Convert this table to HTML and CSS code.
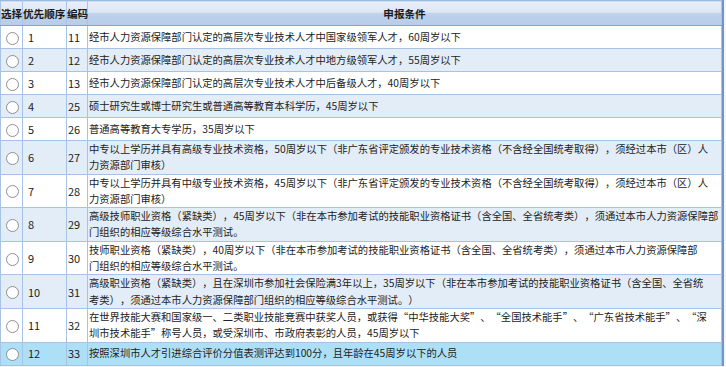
FILE: index.html
```html
<!DOCTYPE html>
<html lang="zh-CN">
<head>
<meta charset="utf-8">
<title>申报条件</title>
<link rel="stylesheet" href="styles.css">
</head>
<body>
<div class="grid-wrap">
<table class="grid">
  <colgroup>
    <col class="c-sel"><col class="c-ord"><col class="c-code"><col class="c-cond">
  </colgroup>
  <thead>
    <tr>
      <th class="h-sel">选择</th>
      <th class="h-ord">优先顺序</th>
      <th class="h-code">编码</th>
      <th class="h-cond">申报条件</th>
    </tr>
  </thead>
  <tbody>
    <tr class="one">
      <td class="sel"><span class="radio"></span></td><td class="ord">1</td><td class="code">11</td>
      <td class="cond">经市人力资源保障部门认定的高层次专业技术人才中国家级领军人才，60周岁以下</td>
    </tr>
    <tr class="one alt">
      <td class="sel"><span class="radio"></span></td><td class="ord">2</td><td class="code">12</td>
      <td class="cond">经市人力资源保障部门认定的高层次专业技术人才中地方级领军人才，55周岁以下</td>
    </tr>
    <tr class="one">
      <td class="sel"><span class="radio"></span></td><td class="ord">3</td><td class="code">13</td>
      <td class="cond">经市人力资源保障部门认定的高层次专业技术人才中后备级人才，40周岁以下</td>
    </tr>
    <tr class="one alt">
      <td class="sel"><span class="radio"></span></td><td class="ord">4</td><td class="code">25</td>
      <td class="cond">硕士研究生或博士研究生或普通高等教育本科学历，45周岁以下</td>
    </tr>
    <tr class="one">
      <td class="sel"><span class="radio"></span></td><td class="ord">5</td><td class="code">26</td>
      <td class="cond">普通高等教育大专学历，35周岁以下</td>
    </tr>
    <tr class="two alt">
      <td class="sel"><span class="radio"></span></td><td class="ord">6</td><td class="code">27</td>
      <td class="cond">中专以上学历并具有高级专业技术资格，50周岁以下（非广东省评定颁发的专业技术资格（不含经全国统考取得），须经过本市（区）人<br>力资源部门审核）</td>
    </tr>
    <tr class="two">
      <td class="sel"><span class="radio"></span></td><td class="ord">7</td><td class="code">28</td>
      <td class="cond">中专以上学历并具有中级专业技术资格，45周岁以下（非广东省评定颁发的专业技术资格（不含经全国统考取得），须经过本市（区）人<br>力资源部门审核）</td>
    </tr>
    <tr class="two alt">
      <td class="sel"><span class="radio"></span></td><td class="ord">8</td><td class="code">29</td>
      <td class="cond">高级技师职业资格（紧缺类），45周岁以下（非在本市参加考试的技能职业资格证书（含全国、全省统考类），须通过本市人力资源保障部<br>门组织的相应等级综合水平测试。</td>
    </tr>
    <tr class="two">
      <td class="sel"><span class="radio"></span></td><td class="ord">9</td><td class="code">30</td>
      <td class="cond">技师职业资格（紧缺类），40周岁以下（非在本市参加考试的技能职业资格证书（含全国、全省统考类），须通过本市人力资源保障部<br>门组织的相应等级综合水平测试。</td>
    </tr>
    <tr class="two alt">
      <td class="sel"><span class="radio"></span></td><td class="ord">10</td><td class="code">31</td>
      <td class="cond">高级职业资格（紧缺类），且在深圳市参加社会保险满3年以上，35周岁以下（非在本市参加考试的技能职业资格证书（含全国、全省统<br>考类），须通过本市人力资源保障部门组织的相应等级综合水平测试。）</td>
    </tr>
    <tr class="two">
      <td class="sel"><span class="radio"></span></td><td class="ord">11</td><td class="code">32</td>
      <td class="cond">在世界技能大赛和国家级一、二类职业技能竞赛中获奖人员，或获得“中华技能大奖”、“全国技术能手”、“广东省技术能手”、“深<br>圳市技术能手”称号人员，或受深圳市、市政府表彰的人员，45周岁以下</td>
    </tr>
    <tr class="one current">
      <td class="sel"><span class="radio"></span></td><td class="ord">12</td><td class="code">33</td>
      <td class="cond">按照深圳市人才引进综合评价分值表测评达到100分，且年龄在45周岁以下的人员</td>
    </tr>
  </tbody>
</table>
</div>
</body>
</html>
```

FILE: styles.css
```css
html, body {
  margin: 0;
  padding: 0;
}
body {
  background: #f3f5f8;
  width: 726px;
  height: 367px;
  overflow: hidden;
  font-family: "Noto Sans CJK SC", "Noto Sans", sans-serif;
  color: #222;
}
.grid-wrap {
  width: 722px;
  border-right: 2px solid #7294c8;
  background: #ffffff;
}
.grid {
  border-collapse: collapse;
  table-layout: fixed;
  width: 722px;
  font-size: 10.3px;
  text-spacing-trim: space-all;
}
.c-sel { width: 22px; }
.c-ord { width: 44px; }
.c-code { width: 21px; }
.c-cond { width: auto; }

.grid th {
  height: 24px;
  padding: 0;
  font-weight: bold;
  font-size: 10.6px;
  color: #1b1b1b;
  white-space: nowrap;
  background: linear-gradient(to bottom, #e9eff8 0%, #dde7f4 45%, #bdd1ea 50%, #b8cde9 100%);
  border-top: 1px solid #9ab9e2;
  border-bottom: 1px solid #7fa4d6;
  border-left: 1px solid #a9c3e6;
  border-right: 1px solid #a9c3e6;
  overflow: visible;
}
.grid th.h-sel, .grid th.h-ord, .grid th.h-code { text-align: left; }
.grid th.h-cond { text-align: center; }

.grid td {
  padding: 0;
  border: 1px solid #a6c2e4;
  vertical-align: middle;
  line-height: 16.3px;
  white-space: nowrap;
  overflow: hidden;
}
.grid tr.one td { height: 22px; }
.grid tr.alt td { background: #e3edf7; }
.grid tr.current td { background: #ade0f6; }

.grid td.sel { text-align: center; }
.grid td.ord { padding-left: 5px; font-size: 11px; }
.grid td.code { padding-left: 1px; font-size: 11px; }
.grid td.cond { padding-left: 1px; }

.radio {
  display: inline-block;
  width: 11px;
  height: 11px;
  border: 1px solid #8d8f92;
  border-radius: 50%;
  background: #ffffff;
  vertical-align: middle;
  margin-left: 1px;
}
```
